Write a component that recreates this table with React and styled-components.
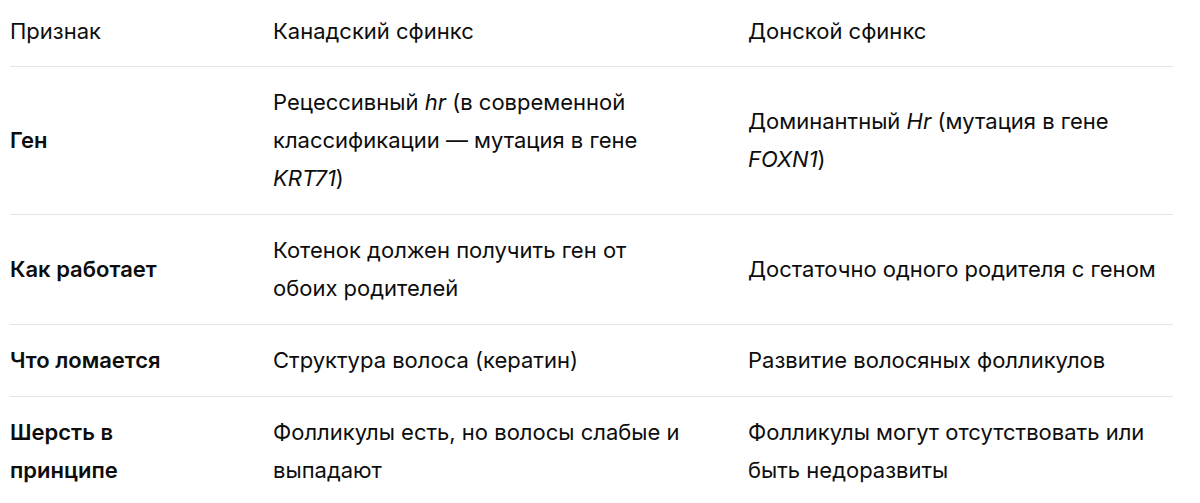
import React from "react";
import styled, { createGlobalStyle } from "styled-components";

const Global = createGlobalStyle`
  html, body { margin: 0; padding: 0; background: #ffffff; }
  body {
    font-family: Inter, "Noto Sans", "Liberation Sans", sans-serif;
    color: #0d0d0d;
    -webkit-font-smoothing: antialiased;
  }
`;

const Wrap = styled.div`
  padding: 0 27px 0 10px;
`;

const Table = styled.div`
  display: grid;
  grid-template-columns: 263px 475px 1fr;
  font-size: 22px;
  line-height: 38px;
`;

const Row = styled.div`
  display: contents;
`;

const padRight = ["73px", "60px", "0"];

const Cell = styled.div`
  display: flex;
  align-items: center;
  padding: ${(p) => (p.$head ? "12px" : "16px")} ${(p) => padRight[p.$col]}
    ${(p) => (p.$head ? "16px" : "17px")} 0;
  border-bottom: ${(p) => (p.$last ? "none" : "1px solid #e5e5e5")};
  font-weight: ${(p) => (p.$bold ? 600 : 400)};
`;

const Text = styled.span`
  display: block;
`;

const rows = [
  [
    "Ген",
    <>Рецессивный <i>hr</i> (в современной классификации — мутация в гене <i>KRT71</i>)</>,
    <>Доминантный <i>Hr</i> (мутация в гене <i>FOXN1</i>)</>,
  ],
  ["Как работает", "Котенок должен получить ген от обоих родителей", "Достаточно одного родителя с геном"],
  ["Что ломается", "Структура волоса (кератин)", "Развитие волосяных фолликулов"],
  ["Шерсть в принципе", "Фолликулы есть, но волосы слабые и выпадают", "Фолликулы могут отсутствовать или быть недоразвиты"],
];

const head = ["Признак", "Канадский сфинкс", "Донской сфинкс"];

export default function App() {
  return (
    <>
      <Global />
      <Wrap>
        <Table>
          <Row>
            {head.map((h, j) => (
              <Cell key={j} $head $col={j}><Text>{h}</Text></Cell>
            ))}
          </Row>
          {rows.map((r, i) => (
            <Row key={i}>
              {r.map((c, j) => (
                <Cell key={j} $col={j} $bold={j === 0} $last={i === rows.length - 1}>
                  <Text>{c}</Text>
                </Cell>
              ))}
            </Row>
          ))}
        </Table>
      </Wrap>
    </>
  );
}
